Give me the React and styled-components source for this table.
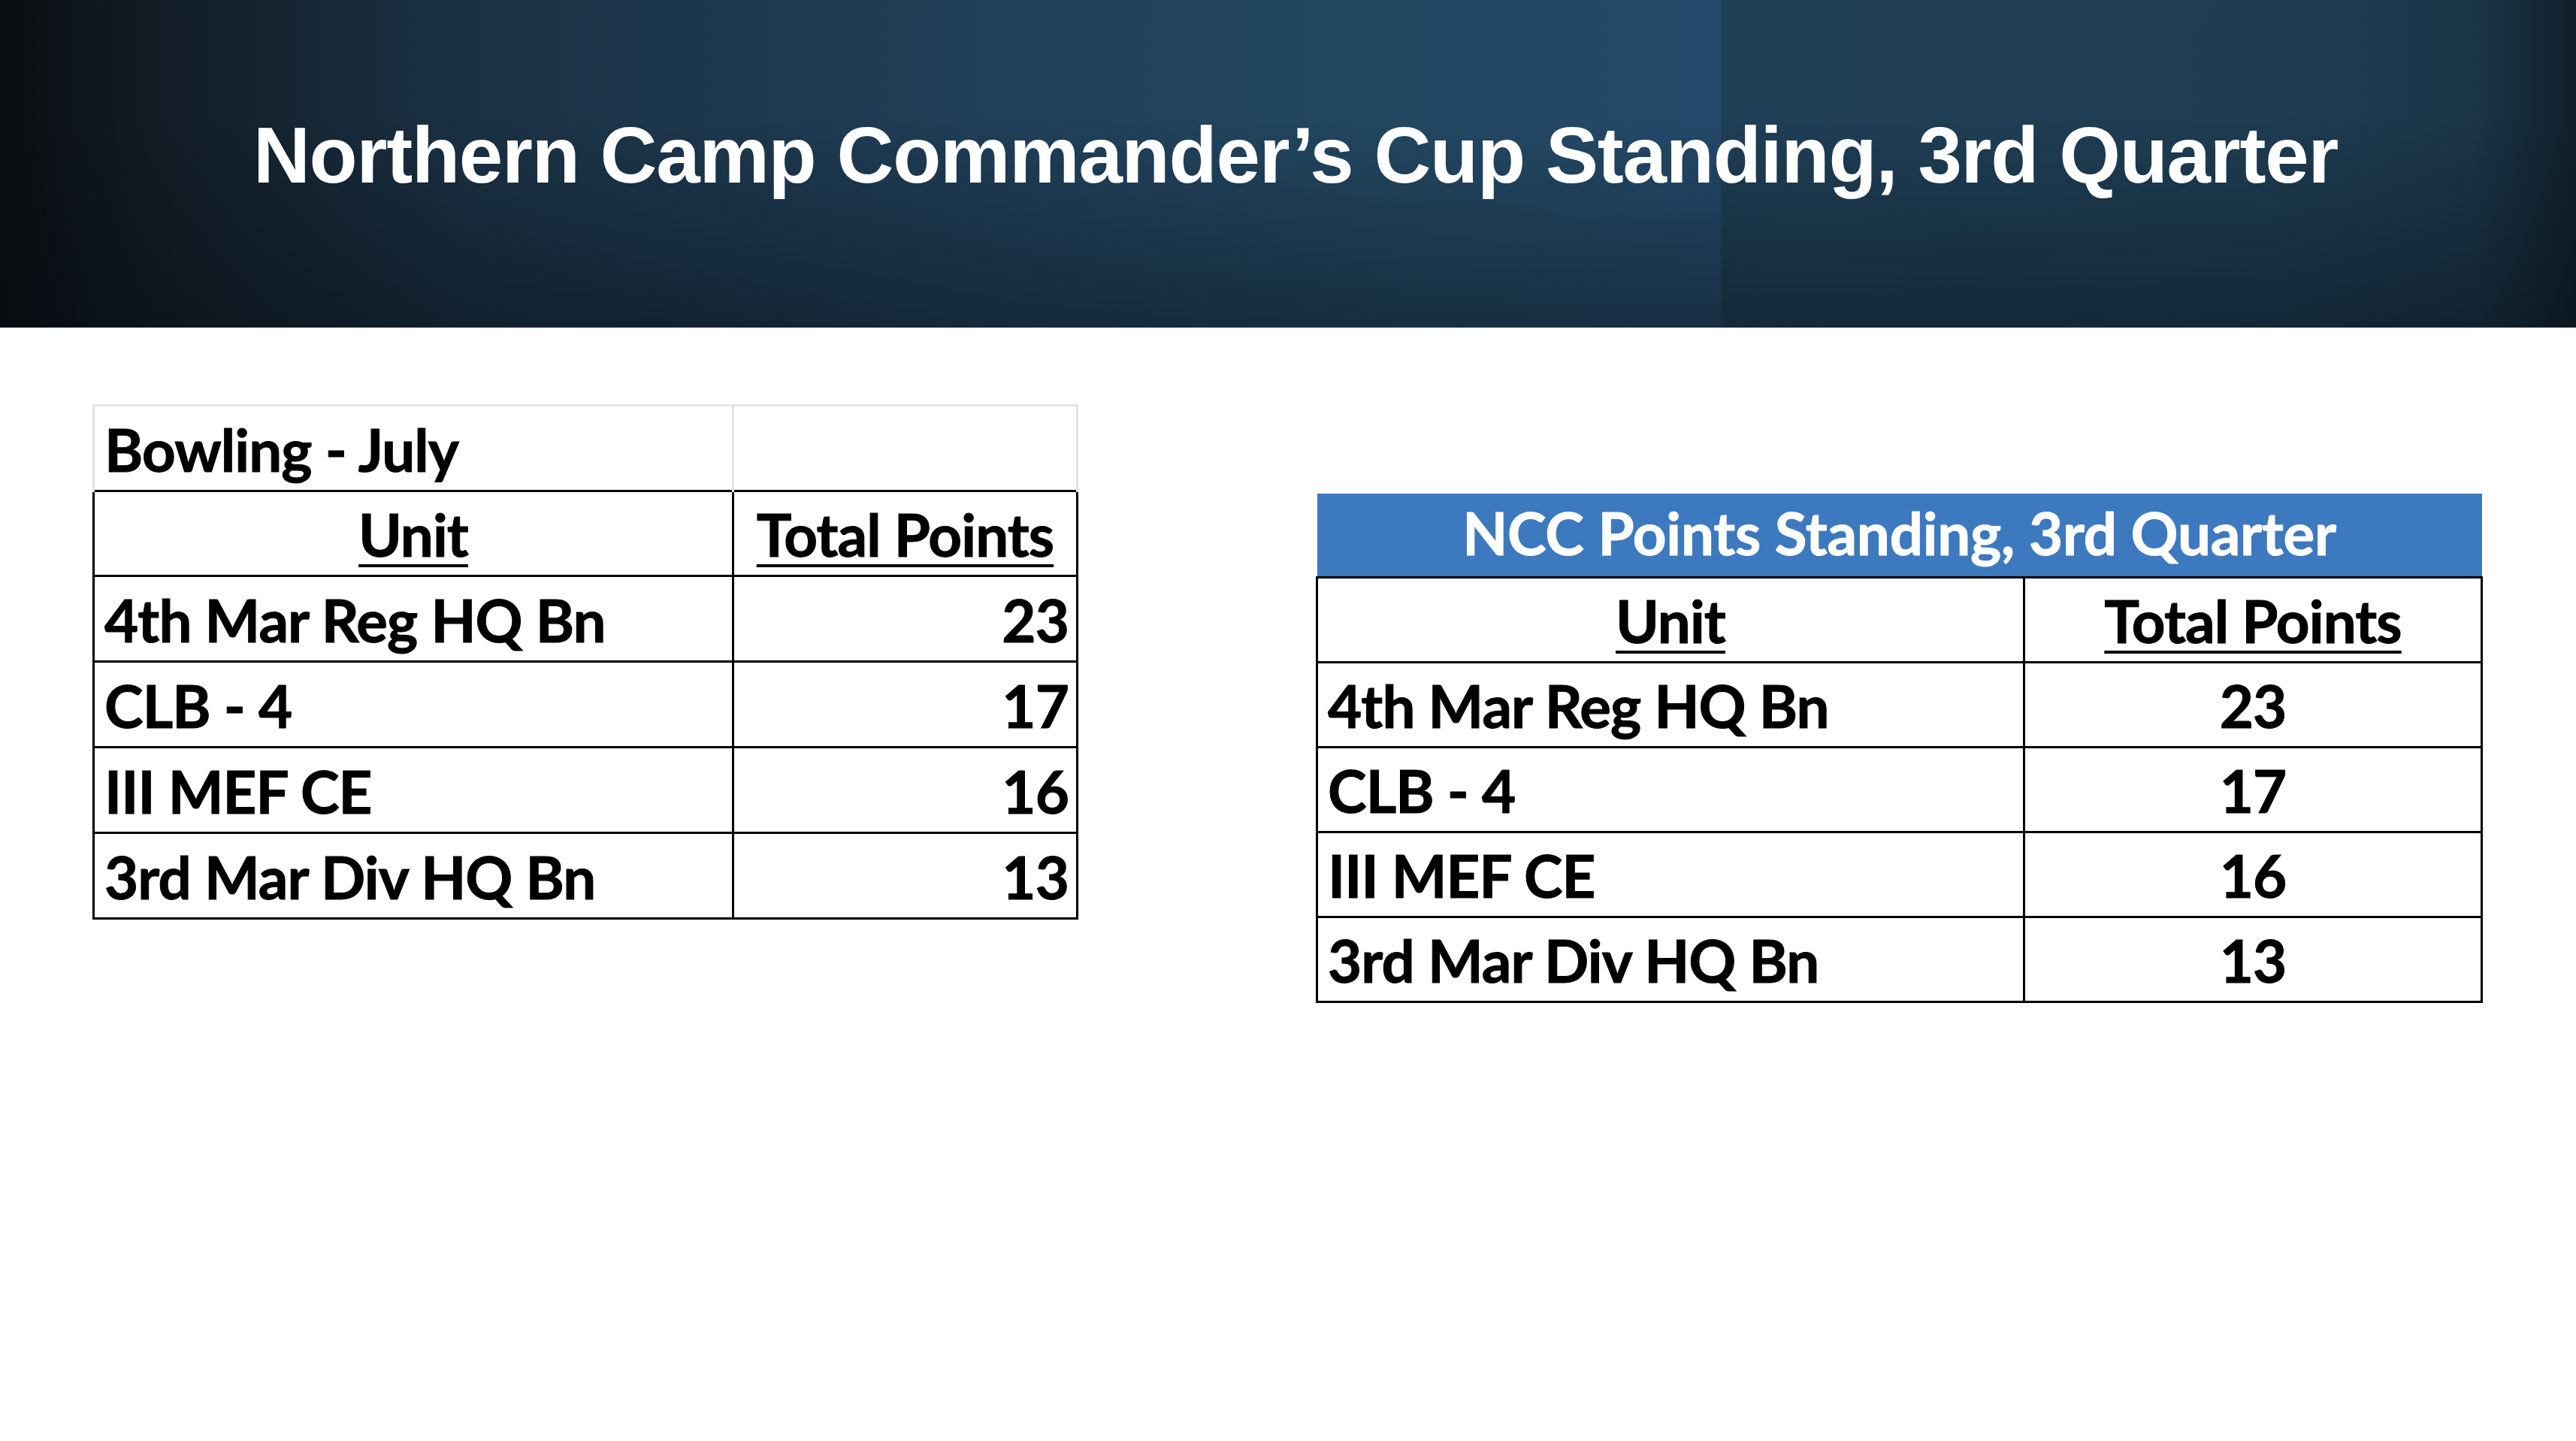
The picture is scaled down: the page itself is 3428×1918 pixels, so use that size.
import React from "react";
import styled, { createGlobalStyle } from "styled-components";

const Global = createGlobalStyle`
  html, body { margin: 0; padding: 0; background: #ffffff; }
  body { width: 3428px; height: 1918px; overflow: hidden; }
`;

const Slide = styled.div`
  width: 3428px;
  height: 1918px;
  background: #ffffff;
  display: flex;
  flex-direction: column;
`;

const Banner = styled.header`
  height: 436px;
  flex: none;
  display: flex;
  align-items: center;
  justify-content: center;
  padding: 0 0 24px 20px;
  box-sizing: border-box;
  background:
    linear-gradient(180deg, rgba(0, 0, 0, 0) 35%, rgba(4, 10, 16, 0.42) 100%),
    linear-gradient(90deg, #0a0d10 0%, #121c25 6%, #1a3144 18%, #20405a 40%, #234862 55%, #24496a 66.8%, #1f3f56 66.8%, #1e3d53 88%, #1b3548 96%, #10202b 100%);
`;

const Title = styled.h1`
  margin: 0;
  font-family: "Liberation Sans", Arial, sans-serif;
  font-weight: 700;
  font-size: 105px;
  line-height: 1;
  color: #ffffff;
  letter-spacing: -1.2px;
  white-space: nowrap;
`;

const Body = styled.main`
  display: flex;
  align-items: flex-start;
  padding: 102px 0 0 123px;
  gap: 316px;
`;

const Table = styled.table`
  border-collapse: collapse;
  width: ${(p) => p.$w}px;
  margin-top: ${(p) => p.$top || 0}px;
  font-family: Lato, "Open Sans", sans-serif;
  font-weight: 700;
  font-size: 78px;
  color: #000000;
  table-layout: fixed;
  -webkit-text-stroke: 1px currentColor;
`;

const Cell = styled.td`
  height: ${(p) => p.$h || 111}px;
  box-sizing: border-box;
  padding: 2px ${(p) => (p.$align === "right" ? 10 : 13)}px 0 13px;
  border: 3px solid #000000;
  text-align: ${(p) => p.$align || "left"};
  vertical-align: middle;
  white-space: nowrap;
  line-height: 1;
  letter-spacing: -0.9px;
`;

const SoftCell = styled(Cell)`
  border: 3px solid #e4e4e4;
  border-bottom: none;
`;

const HeadCell = styled(Cell)`
  text-align: center;
  padding-left: 4px;
  padding-right: 4px;
  text-decoration: underline;
  text-decoration-thickness: 4px;
  text-underline-offset: 10px;
`;

const BannerCell = styled.th`
  height: 111px;
  box-sizing: border-box;
  padding: 0 0 6px 0;
  background: #3d79be;
  color: #ffffff;
  font-weight: 700;
  text-align: center;
  vertical-align: middle;
  border: none;
  line-height: 1;
  white-space: nowrap;
  letter-spacing: -0.2px;
  -webkit-text-stroke: 1px #ffffff;
`;

const rows = [
  ["4th Mar Reg HQ Bn", 23],
  ["CLB - 4", 17],
  ["III MEF CE", 16],
  ["3rd Mar Div HQ Bn", 13],
];

function BowlingTable() {
  return (
    <Table $w={1309}>
      <colgroup>
        <col style={{ width: 851 }} />
        <col style={{ width: 458 }} />
      </colgroup>
      <tbody>
        <tr>
          <SoftCell $h={114}>Bowling - July</SoftCell>
          <SoftCell $h={114} />
        </tr>
        <tr>
          <HeadCell $h={113}>Unit</HeadCell>
          <HeadCell $h={113}>Total Points</HeadCell>
        </tr>
        {rows.map(([u, n]) => (
          <tr key={u}>
            <Cell $h={114}>{u}</Cell>
            <Cell $h={114} $align="right">{n}</Cell>
          </tr>
        ))}
      </tbody>
    </Table>
  );
}

function StandingTable() {
  return (
    <Table $w={1550} $top={119}>
      <colgroup>
        <col style={{ width: 941 }} />
        <col style={{ width: 609 }} />
      </colgroup>
      <thead>
        <tr>
          <BannerCell colSpan={2}>NCC Points Standing, 3rd Quarter</BannerCell>
        </tr>
      </thead>
      <tbody>
        <tr>
          <HeadCell $h={113}>Unit</HeadCell>
          <HeadCell $h={113}>Total Points</HeadCell>
        </tr>
        {rows.map(([u, n]) => (
          <tr key={u}>
            <Cell $h={113}>{u}</Cell>
            <Cell $h={113} $align="center">{n}</Cell>
          </tr>
        ))}
      </tbody>
    </Table>
  );
}

export default function App() {
  return (
    <Slide>
      <Global />
      <Banner>
        <Title>Northern Camp Commander’s Cup Standing, 3rd Quarter</Title>
      </Banner>
      <Body>
        <BowlingTable />
        <StandingTable />
      </Body>
    </Slide>
  );
}
